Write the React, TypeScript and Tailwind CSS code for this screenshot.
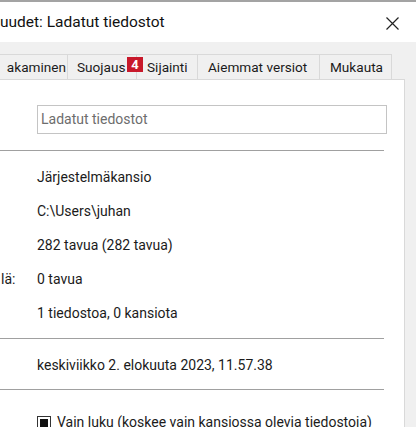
import React from "react";

const font = { fontFamily: 'Roboto, "Liberation Sans", sans-serif' };

function Row({ label, value }: { label?: string; value: string }) {
  return (
    <div className="flex h-[34px] items-center">
      <div className="w-[37px] shrink-0 pl-[1px]">{label}</div>
      <div>{value}</div>
    </div>
  );
}

export default function App() {
  return (
    <div
      className="w-[416px] h-[427px] overflow-hidden bg-[#f0f0f0] border-t-[2px] border-[#a3a3a3] text-[14px] text-[#1b1b1b]"
      style={font}
    >
      {/* title bar */}
      <div className="h-[40px] pt-[2px] bg-white flex items-center justify-between">
        <div className="text-[15.5px] text-[#111]">uudet: Ladatut tiedostot</div>
        <svg width="13" height="13" viewBox="0 0 13 13" className="mr-[17px]">
          <path d="M0.5 0.5 L12.5 12.5 M12.5 0.5 L0.5 12.5" stroke="#222" strokeWidth="1.2" />
        </svg>
      </div>
      {/* tabs */}
      <div className="pt-[12px] relative">
        <div className="flex h-[25px] text-[13.6px]">
          <div className="w-[68px] border-t border-r border-[#d9d9d9] flex items-center justify-end pr-[1px]">akaminen</div>
          <div className="w-[69px] border-t border-r border-[#d9d9d9] flex items-center pl-[9px]">Suojaus</div>
          <div className="w-[61px] border-t border-r border-[#d9d9d9] flex items-center pl-[10px]">Sijainti</div>
          <div className="w-[122px] border-t border-r border-[#d9d9d9] flex items-center pl-[10px]">Aiemmat versiot</div>
          <div className="w-[72px] border-t border-r border-[#d9d9d9] flex items-center pl-[10px]">Mukauta</div>
        </div>
        <div className="absolute left-[127px] top-[15px] w-[16px] h-[15px] bg-[#c8192b] text-white font-bold text-[13px] flex items-center justify-center leading-none">
          4
        </div>
      </div>
      {/* panel */}
      <div className="flex">
        <div className="w-[405px] h-[400px] bg-white border-r border-t border-[#d9d9d9] pt-[25px]">
          <div className="ml-[37px] w-[350px] h-[29px] border border-[#c4c4c4] flex items-center pl-[3px] text-[#6d6d6d]">
            Ladatut tiedostot
          </div>
          <div className="mt-[16px] w-[384px] h-px bg-[#a0a0a0]" />
          <div className="mt-[9px]">
            <Row value="Järjestelmäkansio" />
            <Row value="C:\Users\juhan" />
            <Row value="282 tavua (282 tavua)" />
            <Row label="lä:" value="0 tavua" />
            <Row value="1 tiedostoa, 0 kansiota" />
          </div>
          <div className="mt-[8px] w-[384px] h-px bg-[#a0a0a0]" />
          <div className="mt-[9px]">
            <Row value="keskiviikko 2. elokuuta 2023, 11.57.38" />
          </div>
          <div className="mt-[7px] w-[384px] h-px bg-[#a0a0a0]" />
          <div className="mt-[22px] ml-[37px] flex items-center gap-[6px]">
            <div className="w-[14px] h-[14px] border border-[#333] flex items-center justify-center shrink-0">
              <div className="w-[8px] h-[8px] bg-[#111]" />
            </div>
            <div className="whitespace-nowrap">Vain luku (koskee vain kansiossa olevia tiedostoja)</div>
          </div>
        </div>
      </div>
    </div>
  );
}
